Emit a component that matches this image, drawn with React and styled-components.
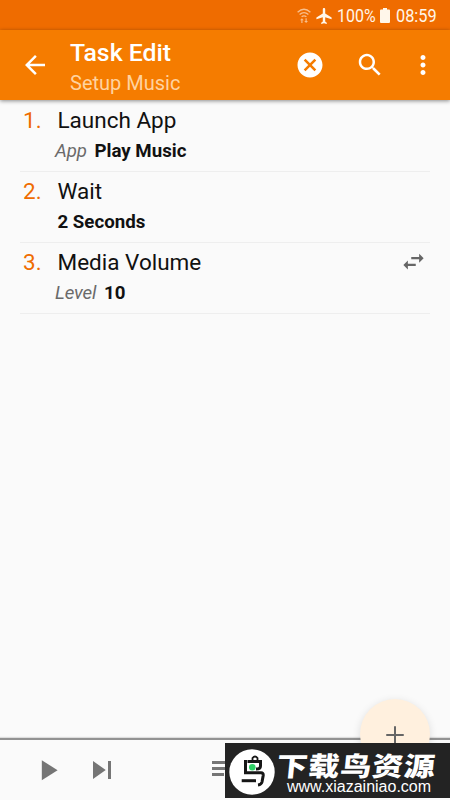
import React from 'react'
import styled, { createGlobalStyle } from 'styled-components'

const GlobalStyle = createGlobalStyle`
    * { box-sizing: border-box; }
    body {
        margin: 0;
        background: #fafafa;
        font-family: Roboto, "Liberation Sans", sans-serif;
    }
`;
const Screen = styled.div`
    position: relative;
    display: flex;
    flex-direction: column;
    width: 450px;
    height: 800px;
    overflow: hidden;
    background: #fafafa;
`;
const StatusBar = styled.div`
    display: flex;
    align-items: center;
    flex: none;
    height: 30px;
    padding: 1px 0 0 297px;
    background: #ef6c00;
    color: #fff6ea;
`;
const StatusText = styled.span`
    width: ${props => props.$width}px;
    margin-left: ${props => props.$gap}px;
    font-size: 19px;
    line-height: 28px;
    white-space: nowrap;
    transform: scaleX(${props => props.$squeeze});
    transform-origin: left center;
`;
const Icon = styled.svg`
    display: block;
    flex: none;
    width: ${props => props.$size}px;
    height: ${props => props.$size}px;
    margin-left: ${props => props.$gap || 0}px;
    fill: ${props => props.$color || 'currentColor'};
`;
const StatusIcon = styled.svg`
    display: block;
    flex: none;
    margin-left: ${props => props.$gap || 0}px;
    fill: currentColor;
`;
const Toolbar = styled.header`
    display: flex;
    align-items: center;
    flex: none;
    z-index: 1;
    height: 70px;
    padding-left: 20px;
    background: #f57c00;
    color: #fff;
    box-shadow: 0 1px 4px rgba(0, 0, 0, 0.45);
`;
const Titles = styled.div`
    width: 225px;
    margin-left: 20px;
    padding-top: 5px;
`;
const Title = styled.h1`
    margin: 0;
    font-size: 24.8px;
    font-weight: 500;
    line-height: 30px;
`;
const Subtitle = styled.h2`
    margin: 0;
    color: #ffd3a0;
    font-size: 20px;
    font-weight: 400;
    line-height: 30px;
`;
const Actions = styled.ol`
    flex: 1;
    margin: 0;
    padding: 1px 20px 0;
    list-style: none;
`;
const Action = styled.li`
    display: flex;
    height: 71px;
    padding-left: 3px;
    border-bottom: 1px solid #eee;
`;
const Number = styled.span`
    width: 34.5px;
    color: #ef6c00;
    font-size: 22.5px;
    line-height: 38px;
`;
const Details = styled.div`
    flex: 1;
`;
const Name = styled.div`
    color: #111;
    font-size: 22.5px;
    line-height: 38px;
`;
const Param = styled.div`
    display: flex;
    gap: 7.5px;
    margin-left: ${props => props.$labelled ? -2.5 : 0}px;
    font-size: 18.7px;
    line-height: 25px;
`;
const Label = styled.em`
    color: #6a6a6a;
    font-weight: 400;
    letter-spacing: -0.1px;
`;
const Value = styled.strong`
    color: #111;
    font-weight: 700;
`;
const SwapSlot = styled.div`
    padding: 5px 3px 0 0;
`;
const BottomBar = styled.footer`
    display: flex;
    align-items: center;
    flex: none;
    height: 62px;
    padding-left: 31px;
    border-top: 2px solid #929292;
    box-shadow: 0 -1px 1px #ddd;
    background: #fafafa;
    color: #757575;
`;
const AddButton = styled.button`
    position: absolute;
    top: 699px;
    left: 360px;
    display: flex;
    align-items: center;
    justify-content: center;
    width: 70px;
    height: 70px;
    padding: 2px 0 0;
    border: 0;
    border-radius: 50%;
    background: #fff0de;
    box-shadow: 0 2px 8px rgba(0, 0, 0, 0.12);
    color: #666;
`;
const SiteBadge = styled.div`
    position: absolute;
    top: 743px;
    left: 225px;
    display: flex;
    width: 225px;
    height: 55px;
    padding: 6px 0 0 4px;
    background: #232323;
    color: #fff;
`;
const SiteText = styled.div`
    display: flex;
    flex-direction: column;
    margin: 0 0 0 2px;
`;
const SiteName = styled.span`
    font-family: "Noto Sans CJK SC", sans-serif;
    font-size: 31px;
    font-weight: 900;
    line-height: 31px;
    letter-spacing: 0.8px;
    white-space: nowrap;
    transform: scaleY(0.86) skewX(-5deg);
`;
const SiteUrl = styled.span`
    margin-left: 10px;
    font-family: "Liberation Sans", sans-serif;
    font-size: 16px;
    line-height: 14px;
    white-space: nowrap;
`;

const BackIcon = () => (
    <Icon $size={30} viewBox="0 0 24 24">
        <path d="M20 11H7.83l5.59-5.59L12 4l-8 8 8 8 1.41-1.41L7.83 13H20v-2z" />
    </Icon>
)
const CancelIcon = () => (
    <Icon $size={30} viewBox="0 0 24 24">
        <path d="M12 2C6.47 2 2 6.47 2 12s4.47 10 10 10 10-4.47 10-10S17.53 2 12 2zm5 13.59L15.59 17 12 13.41 8.41 17 7 15.59 10.59 12 7 8.41 8.41 7 12 10.59 15.59 7 17 8.41 13.41 12 17 15.59z" />
    </Icon>
)
const SearchIcon = () => (
    <Icon $size={30} $gap={30} viewBox="0 0 24 24">
        <path d="M15.5 14h-.79l-.28-.27C15.41 12.59 16 11.11 16 9.5 16 5.91 13.09 3 9.5 3S3 5.91 3 9.5 5.91 16 9.5 16c1.61 0 3.09-.59 4.23-1.57l.27.28v.79l5 4.99L20.49 19l-4.99-5zm-6 0C7.01 14 5 11.99 5 9.5S7.01 5 9.5 5 14 7.01 14 9.5 11.99 14 9.5 14z" />
    </Icon>
)
const MoreIcon = () => (
    <Icon $size={30} $gap={22.5} viewBox="0 0 24 24">
        <path d="M12 8c1.1 0 2-.9 2-2s-.9-2-2-2-2 .9-2 2 .9 2 2 2zm0 2c-1.1 0-2 .9-2 2s.9 2 2 2 2-.9 2-2-.9-2-2-2zm0 6c-1.1 0-2 .9-2 2s.9 2 2 2 2-.9 2-2-.9-2-2-2z" />
    </Icon>
)
const SwapIcon = () => (
    <Icon $size={27} $color="#666" viewBox="0 0 24 24">
        <path d="M6.99 11L3 15l3.99 4v-3H14v-2H6.99v-3zM21 9l-3.99-4v3H10v2h7.01v3L21 9z" />
    </Icon>
)
const WifiIcon = () => (
    <StatusIcon width="14" height="16" viewBox="0 0 14 16" opacity="0.6">
        <g fill="none" stroke="currentColor" strokeWidth="1.3">
            <path d="M0.6 4.2Q7 -1.6 13.4 4.2" />
            <path d="M2.6 6.6Q7 2.6 11.4 6.6" />
            <path d="M4.6 8.8Q7 6.8 9.4 8.8" />
        </g>
        <path d="M3 12.3l1.9-2.1 1.9 2.1H5.5v2.7H4.3v-2.7zM7.2 12.9h1.3v-2.7h1.2v2.7H11L9.1 15z" />
    </StatusIcon>
)
const PlaneIcon = () => (
    <StatusIcon $gap={4.5} width="16" height="16" viewBox="2 2 19 20">
        <path d="M21 16v-2l-8-5V3.5c0-.83-.67-1.5-1.5-1.5S10 2.67 10 3.5V9l-8 5v2l8-2.5V19l-2 1.5V22l3.5-1 3.5 1v-1.5L13 19v-5.5l8 2.5z" />
    </StatusIcon>
)
const BatteryIcon = () => (
    <StatusIcon $gap={5} width="10" height="15" viewBox="0 0 10 15">
        <path d="M3 0h4v1.5h2q1 0 1 1v11.5q0 1-1 1H1q-1 0-1-1V2.5q0-1 1-1h2z" />
    </StatusIcon>
)
const BirdLogo = () => (
    <svg width="46" height="46" viewBox="0 0 46 46">
        <circle cx="23" cy="23" r="22.7" fill="#fff" />
        <g fill="none" stroke="#161616" strokeWidth="3">
            <path d="M23.5 11.5V9q2.5-3 5 0v2.5" strokeWidth="1.8" />
            <path d="M19 12.5H31.5V17q0 3-4.5 3" />
            <path d="M18.5 12.5H16.5V23.8H32q2.5 0 2.2 2.7L33 33q-.6 2.6-4 3" />
            <path d="M12.7 31.7H27" />
        </g>
        <circle cx="23.3" cy="18.3" r="3.3" fill="#2fd266" />
    </svg>
)

const actions = [
    { name: 'Launch App', label: 'App', value: 'Play Music' },
    { name: 'Wait', value: '2 Seconds' },
    { name: 'Media Volume', label: 'Level', value: '10', swap: true },
]

export default function App() {
    return (
        <Screen>
            <GlobalStyle />
            <StatusBar>
                <WifiIcon />
                <PlaneIcon />
                <StatusText $width={38} $gap={5.5} $squeeze={0.84}>100%</StatusText>
                <BatteryIcon />
                <StatusText $width={42} $gap={5.5} $squeeze={0.86}>08:59</StatusText>
            </StatusBar>
            <Toolbar>
                <BackIcon />
                <Titles>
                    <Title>Task Edit</Title>
                    <Subtitle>Setup Music</Subtitle>
                </Titles>
                <CancelIcon />
                <SearchIcon />
                <MoreIcon />
            </Toolbar>
            <Actions>
                {actions.map((action, i) => (
                    <Action key={action.name}>
                        <Number>{i + 1}.</Number>
                        <Details>
                            <Name>{action.name}</Name>
                            <Param $labelled={!!action.label}>
                                {action.label && <Label>{action.label}</Label>}
                                <Value>{action.value}</Value>
                            </Param>
                        </Details>
                        {action.swap && <SwapSlot><SwapIcon /></SwapSlot>}
                    </Action>
                ))}
            </Actions>
            <BottomBar>
                <Icon $size={34.5} viewBox="0 0 24 24">
                    <path d="M7.5 5v14l11-7z" />
                </Icon>
                <Icon $size={36} $gap={18.5} viewBox="0 0 24 24">
                    <path d="M6 18l8.5-6L6 6v12zM16 6v12h2V6h-2z" />
                </Icon>
                <Icon $size={36} $gap={88.5} viewBox="0 0 24 24">
                    <path d="M2 6h17v2H2zM2 10h17v2H2zM2 14h8v2H2z" />
                </Icon>
            </BottomBar>
            <AddButton>
                <Icon $size={30} viewBox="0 0 24 24">
                    <path d="M5 11.2h6.2V5h1.6v6.2H19v1.6h-6.2V19h-1.6v-6.2H5z" />
                </Icon>
            </AddButton>
            <SiteBadge>
                <BirdLogo />
                <SiteText>
                    <SiteName>下载鸟资源</SiteName>
                    <SiteUrl>www.xiazainiao.com</SiteUrl>
                </SiteText>
            </SiteBadge>
        </Screen>
    )
}
